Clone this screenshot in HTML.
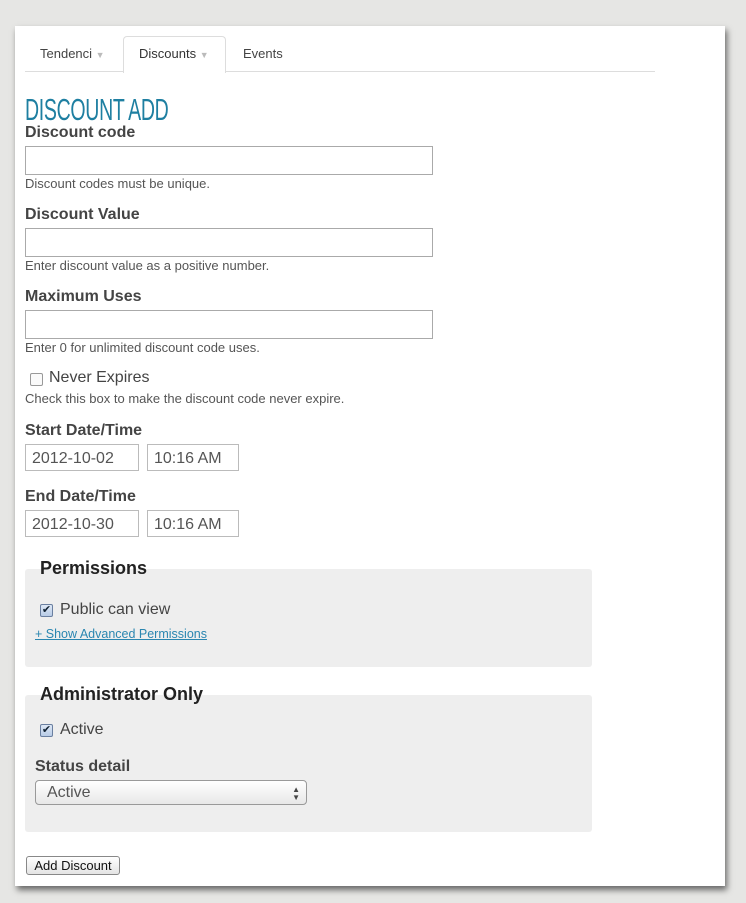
<!DOCTYPE html>
<html><head><style>
body{margin:0;width:746px;height:903px;background:#e6e6e4;font-family:"Liberation Sans",sans-serif;position:relative;overflow:hidden}
.panel{position:absolute;left:15px;top:26px;width:710px;height:860px;background:#fff;box-shadow:2px 4px 6px rgba(0,0,0,.55)}
.a{position:absolute}
.lbl{position:absolute;left:25px;font-weight:bold;font-size:16px;color:#444}
.inp{position:absolute;left:25px;width:406px;height:27px;border:1px solid #aaa;background:#fff}
.help{position:absolute;left:25px;font-size:13px;color:#555}
.dt{position:absolute;height:27px;border:1px solid #bbb;font-size:16px;color:#555;line-height:27px;padding-left:6px;box-sizing:border-box}
.box{position:absolute;left:25px;width:567px;background:#eee;border-radius:3px}
.leg{position:absolute;left:40px;font-weight:bold;font-size:18px;color:#222}
.cb{position:absolute;width:11px;height:11px;border:1px solid #6a7fa0;border-radius:2px;background:linear-gradient(#dde7f5,#b8cbe6);font-size:11px;line-height:11px;text-align:center;color:#123}
.txt{position:absolute;font-size:16px;color:#444}
</style></head><body>
<div class="panel"></div>
<div class="a" style="left:25px;top:71px;width:630px;height:1px;background:#ddd"></div>
<div class="a" style="left:123px;top:36px;width:101px;height:36px;border:1px solid #ddd;border-bottom:none;background:#fff;border-radius:4px 4px 0 0"></div>
<div class="txt" style="left:40px;top:46px;font-size:13px;color:#444">Tendenci <span style="color:#bbb;font-size:9px">▼</span></div>
<div class="txt" style="left:139px;top:46px;font-size:13px;color:#333">Discounts <span style="color:#bbb;font-size:9px">▼</span></div>
<div class="txt" style="left:243px;top:46px;font-size:13px;color:#444">Events</div>
<div class="a" style="left:25px;top:92px;font-size:31px;color:#1e7fa1;transform:scaleX(.63);transform-origin:left;letter-spacing:-0.5px">DISCOUNT ADD</div>
<div class="lbl" style="top:124px">Discount code</div>
<div class="inp" style="top:146px"></div>
<div class="help" style="top:176px">Discount codes must be unique.</div>
<div class="lbl" style="top:206px">Discount Value</div>
<div class="inp" style="top:228px"></div>
<div class="help" style="top:258px">Enter discount value as a positive number.</div>
<div class="lbl" style="top:288px">Maximum Uses</div>
<div class="inp" style="top:310px"></div>
<div class="help" style="top:340px">Enter 0 for unlimited discount code uses.</div>
<div class="a" style="left:30px;top:373px;width:11px;height:11px;border:1px solid #999;border-radius:2px;background:#fafafa"></div>
<div class="txt" style="left:49px;top:369px">Never Expires</div>
<div class="help" style="top:391px">Check this box to make the discount code never expire.</div>
<div class="lbl" style="top:422px">Start Date/Time</div>
<div class="dt" style="left:25px;top:444px;width:114px">2012-10-02</div>
<div class="dt" style="left:147px;top:444px;width:92px">10:16 AM</div>
<div class="lbl" style="top:488px">End Date/Time</div>
<div class="dt" style="left:25px;top:510px;width:114px">2012-10-30</div>
<div class="dt" style="left:147px;top:510px;width:92px">10:16 AM</div>
<div class="box" style="top:569px;height:98px"></div>
<div class="leg" style="top:558px">Permissions</div>
<div class="cb" style="left:40px;top:604px">✔</div>
<div class="txt" style="left:60px;top:601px">Public can view</div>
<div class="a" style="left:35px;top:627px;font-size:12.5px;color:#2a86b0;text-decoration:underline">+ Show Advanced Permissions</div>
<div class="box" style="top:695px;height:137px"></div>
<div class="leg" style="top:684px">Administrator Only</div>
<div class="cb" style="left:40px;top:724px">✔</div>
<div class="txt" style="left:60px;top:721px">Active</div>
<div class="lbl" style="left:35px;top:758px">Status detail</div>
<div class="a" style="left:35px;top:780px;border:1px solid #999;border-radius:4px;background:linear-gradient(#fff,#e8e8e8);font-size:16px;color:#555;line-height:23px;padding-left:11px;box-sizing:border-box;width:272px;height:25px">Active<span style="position:absolute;right:6px;top:0;font-size:8px;line-height:8px;padding-top:5px;color:#444">▲<br>▼</span></div>
<div class="a" style="left:26px;top:856px;width:92px;height:17px;border:1px solid #888;border-radius:3px;background:linear-gradient(#fff,#e4e4e4);font-size:13px;color:#111;text-align:center;line-height:17px">Add Discount</div>
</body></html>
